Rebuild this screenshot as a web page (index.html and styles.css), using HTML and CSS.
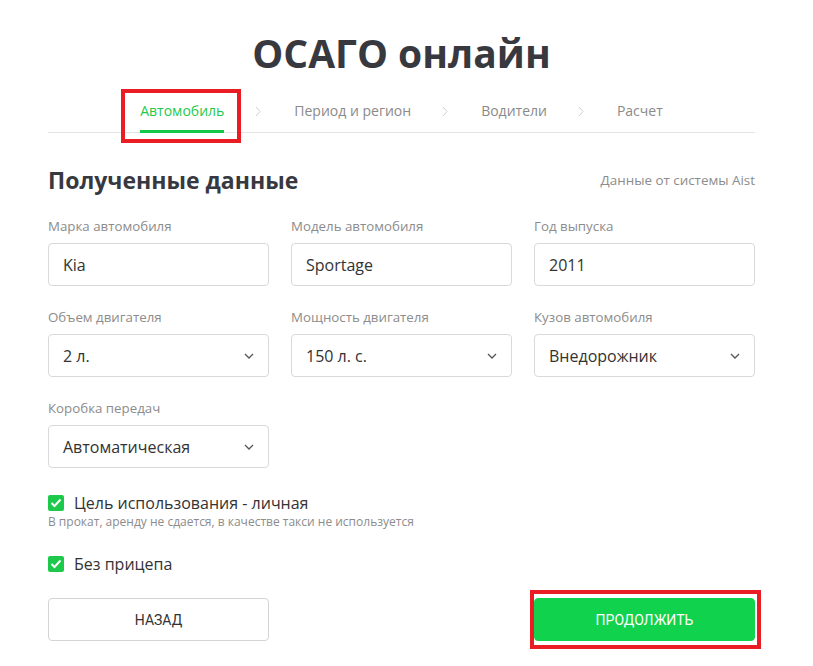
FILE: index.html
```html
<!DOCTYPE html>
<html lang="ru">
<head>
    <meta charset="UTF-8">
    <meta name="viewport" content="width=device-width, initial-scale=1.0">
    <title>ОСАГО онлайн</title>
    <link rel="stylesheet" href="styles.css">
</head>
<body>
    <div class="page">
        <h1 class="title">ОСАГО онлайн</h1>

        <nav class="steps">
            <div class="step active">Автомобиль</div>
            <span class="sep"><svg width="6" height="11" viewBox="0 0 6 11"><path d="M1 1l4 4.5L1 10" fill="none" stroke="#cfcfcf" stroke-width="1"/></svg></span>
            <div class="step">Период и регион</div>
            <span class="sep"><svg width="6" height="11" viewBox="0 0 6 11"><path d="M1 1l4 4.5L1 10" fill="none" stroke="#cfcfcf" stroke-width="1"/></svg></span>
            <div class="step">Водители</div>
            <span class="sep"><svg width="6" height="11" viewBox="0 0 6 11"><path d="M1 1l4 4.5L1 10" fill="none" stroke="#cfcfcf" stroke-width="1"/></svg></span>
            <div class="step">Расчет</div>
        </nav>

        <div class="section-head">
            <h2>Полученные данные</h2>
            <span class="source">Данные от системы Aist</span>
        </div>

        <div class="grid">
            <div class="field">
                <label>Марка автомобиля</label>
                <div class="control">Kia</div>
            </div>
            <div class="field">
                <label>Модель автомобиля</label>
                <div class="control">Sportage</div>
            </div>
            <div class="field">
                <label>Год выпуска</label>
                <div class="control">2011</div>
            </div>
            <div class="field">
                <label>Объем двигателя</label>
                <div class="control select">2 л.<svg width="10" height="6" viewBox="0 0 10 6"><path d="M1 1l4 4 4-4" fill="none" stroke="#555" stroke-width="1.3"/></svg></div>
            </div>
            <div class="field">
                <label>Мощность двигателя</label>
                <div class="control select">150 л. с.<svg width="10" height="6" viewBox="0 0 10 6"><path d="M1 1l4 4 4-4" fill="none" stroke="#555" stroke-width="1.3"/></svg></div>
            </div>
            <div class="field">
                <label>Кузов автомобиля</label>
                <div class="control select">Внедорожник<svg width="10" height="6" viewBox="0 0 10 6"><path d="M1 1l4 4 4-4" fill="none" stroke="#555" stroke-width="1.3"/></svg></div>
            </div>
            <div class="field">
                <label>Коробка передач</label>
                <div class="control select">Автоматическая<svg width="10" height="6" viewBox="0 0 10 6"><path d="M1 1l4 4 4-4" fill="none" stroke="#555" stroke-width="1.3"/></svg></div>
            </div>
        </div>

        <div class="check">
            <span class="box"><svg width="12" height="10" viewBox="0 0 12 10"><path d="M1.5 5l3 3 6-6.5" fill="none" stroke="#fff" stroke-width="2"/></svg></span>
            Цель использования - личная
        </div>
        <div class="hint">В прокат, аренду не сдается, в качестве такси не используется</div>

        <div class="check second">
            <span class="box"><svg width="12" height="10" viewBox="0 0 12 10"><path d="M1.5 5l3 3 6-6.5" fill="none" stroke="#fff" stroke-width="2"/></svg></span>
            Без прицепа
        </div>

        <div class="actions">
            <button class="btn">Назад</button>
            <span></span>
            <button class="btn primary">Продолжить</button>
        </div>
    </div>

    <!-- пометки поверх скриншота -->
    <div class="mark mark-tab"></div>
    <div class="mark mark-btn"></div>
</body>
</html>
```

FILE: styles.css
```css
body {
    margin: 0;
    background: #fff;
    font-family: 'Open Sans', sans-serif;
    color: #333;
}
.page {
    width: 707px;
    margin-left: 48px;
    padding-top: 30px;
}
.title {
    margin: 0;
    text-align: center;
    font-size: 39px;
    line-height: 46px;
    font-weight: 700;
    color: #38383f;
}
.steps {
    margin-top: 25px;
    display: flex;
    justify-content: center;
    align-items: flex-start;
    border-bottom: 1px solid #e4e4e4;
}
.step {
    font-size: 14px;
    line-height: 20px;
    color: #8a8a8a;
    padding-bottom: 9px;
    border-bottom: 3px solid transparent;
    margin-bottom: -1px;
}
.step.active {
    color: #1fc94b;
    border-bottom-color: #15c84a;
}
.sep {
    display: flex;
    align-items: center;
    height: 20px;
    padding: 0 33px 0 31px;
}
.section-head {
    margin-top: 32px;
    display: flex;
    justify-content: space-between;
    align-items: center;
}
.section-head h2 {
    margin: 0;
    font-size: 23px;
    line-height: 30px;
    font-weight: 700;
    color: #38383f;
}
.source {
    font-size: 13.4px;
    color: #8c8c8c;
}
.grid {
    margin-top: 22px;
    display: grid;
    grid-template-columns: repeat(3, 1fr);
    column-gap: 22px;
    row-gap: 22px;
}
.field label {
    display: block;
    font-size: 13.3px;
    line-height: 18px;
    color: #8c8c8c;
    margin-bottom: 8px;
}
.control {
    box-sizing: border-box;
    height: 43px;
    border: 1px solid #d9d9d9;
    border-radius: 4px;
    padding: 0 14px;
    display: flex;
    align-items: center;
    justify-content: space-between;
    font-size: 16px;
    color: #333;
}
.check {
    margin-top: 24px;
    display: flex;
    align-items: center;
    gap: 10px;
    font-size: 16px;
    line-height: 22px;
    color: #333;
}
.check.second {
    margin-top: 23px;
}
.box {
    width: 16px;
    height: 16px;
    border-radius: 2px;
    background: #1cc94b;
    display: flex;
    align-items: center;
    justify-content: center;
}
.hint {
    font-size: 12px;
    line-height: 16px;
    color: #8c8c8c;
}
.actions {
    margin-top: 23px;
    display: grid;
    grid-template-columns: repeat(3, 1fr);
    column-gap: 22px;
}
.btn {
    height: 43px;
    border: 1px solid #d4d4d4;
    border-radius: 4px;
    background: #fff;
    font-family: 'Liberation Sans Narrow', 'Roboto', sans-serif;
    font-size: 14px;
    text-transform: uppercase;
    color: #333;
}
.btn.primary {
    background: #10d24c;
    border-color: #10d24c;
    color: #fff;
}
.mark {
    position: absolute;
    border: 4px solid #ea1c24;
    box-sizing: border-box;
}
.mark-tab {
    left: 121px;
    top: 89px;
    width: 120px;
    height: 54px;
}
.mark-btn {
    left: 530px;
    top: 590px;
    width: 231px;
    height: 59px;
}
```
